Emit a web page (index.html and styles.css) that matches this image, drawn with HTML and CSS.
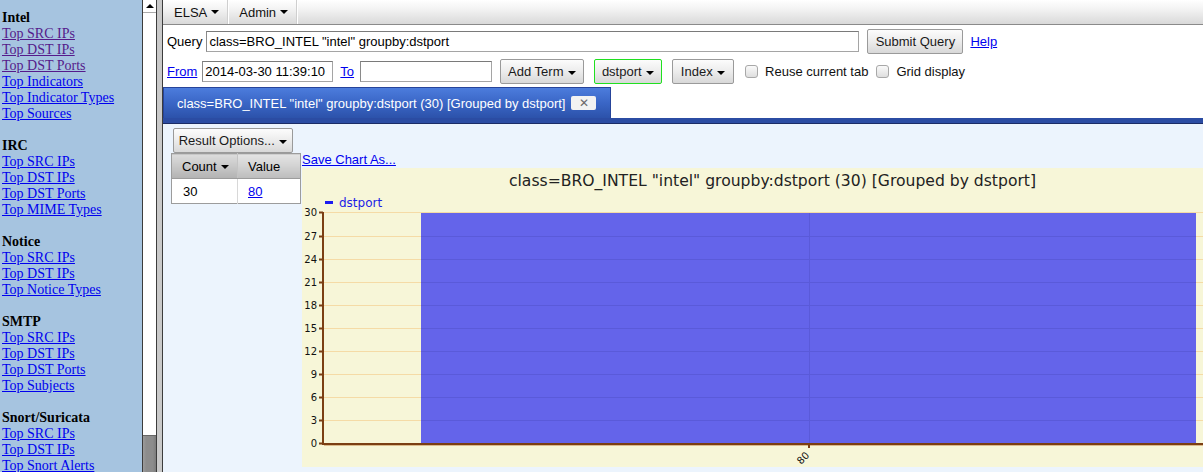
FILE: index.html
```html
<!DOCTYPE html>
<html lang="en">
<head>
  <meta charset="UTF-8">
  <title>ELSA</title>
  <link rel="stylesheet" href="styles.css">
</head>
<body>
<div class="frames">

  <!-- Left frame: dashboard links -->
  <div class="side">
    <b>Intel</b><br>
    <a href="#" class="seen">Top SRC IPs</a><br>
    <a href="#" class="seen">Top DST IPs</a><br>
    <a href="#" class="seen">Top DST Ports</a><br>
    <a href="#">Top Indicators</a><br>
    <a href="#">Top Indicator Types</a><br>
    <a href="#">Top Sources</a><br>
    <br>
    <b>IRC</b><br>
    <a href="#">Top SRC IPs</a><br>
    <a href="#">Top DST IPs</a><br>
    <a href="#">Top DST Ports</a><br>
    <a href="#">Top MIME Types</a><br>
    <br>
    <b>Notice</b><br>
    <a href="#">Top SRC IPs</a><br>
    <a href="#">Top DST IPs</a><br>
    <a href="#">Top Notice Types</a><br>
    <br>
    <b>SMTP</b><br>
    <a href="#">Top SRC IPs</a><br>
    <a href="#">Top DST IPs</a><br>
    <a href="#">Top DST Ports</a><br>
    <a href="#">Top Subjects</a><br>
    <br>
    <b>Snort/Suricata</b><br>
    <a href="#">Top SRC IPs</a><br>
    <a href="#">Top DST IPs</a><br>
    <a href="#">Top Snort Alerts</a>
  </div>
  <div class="vscroll">
    <div class="arrow"></div>
    <div class="thumb"></div>
  </div>
  <div class="frame-edge"></div>

  <!-- Right frame: query UI -->
  <div class="main">
    <div class="topnav">
      <div class="menu">ELSA <span class="caret"></span></div>
      <div class="menu">Admin <span class="caret"></span></div>
    </div>

    <div class="query-row">
      <label>Query</label>
      <input class="field q-input" type="text" value='class=BRO_INTEL "intel" groupby:dstport'>
      <button class="btn submit">Submit Query</button>
      <a href="#" class="help">Help</a>
    </div>

    <div class="term-row">
      <a href="#">From</a>
      <input class="field from-input" type="text" value="2014-03-30 11:39:10">
      <a href="#" class="to-link">To</a>
      <input class="field to-input" type="text">
      <button class="btn add-term">Add Term <span class="caret"></span></button>
      <button class="btn groupby">dstport <span class="caret"></span></button>
      <button class="btn index">Index <span class="caret"></span></button>
      <input type="checkbox" class="check">
      <span class="check-label">Reuse current tab</span>
      <input type="checkbox" class="check check-2">
      <span class="check-label">Grid display</span>
    </div>

    <div class="tabbar">
      <div class="tab">
        class=BRO_INTEL "intel" groupby:dstport (30) [Grouped by dstport]
        <span class="tab-close">&#x2715;</span>
      </div>
    </div>

    <div class="result">
      <div class="result-left">
        <button class="btn options">Result Options... <span class="caret"></span></button>
        <table class="grid">
          <tr>
            <th class="sorted">Count <span class="caret"></span></th>
            <th>Value</th>
          </tr>
          <tr>
            <td>30</td>
            <td><a href="#">80</a></td>
          </tr>
        </table>
      </div>

      <div class="result-right">
        <a href="#" class="save-chart">Save Chart As...</a>
        <svg class="chart" width="910" height="299" viewBox="0 0 910 299">
          <text class="chart-title" x="470.5" y="18" text-anchor="middle">class=BRO_INTEL "intel" groupby:dstport (30) [Grouped by dstport]</text>

          <rect x="23" y="33" width="8" height="3" fill="#1c1cf0"/>
          <text class="legend" x="37" y="39">dstport</text>

          <!-- grid lines behind the bar -->
          <g stroke="#f5dba6" stroke-width="1">
            <line x1="22" x2="910" y1="44.5" y2="44.5"/>
            <line x1="22" x2="910" y1="68.5" y2="68.5"/>
            <line x1="22" x2="910" y1="91.5" y2="91.5"/>
            <line x1="22" x2="910" y1="114.5" y2="114.5"/>
            <line x1="22" x2="910" y1="137.5" y2="137.5"/>
            <line x1="22" x2="910" y1="160.5" y2="160.5"/>
            <line x1="22" x2="910" y1="183.5" y2="183.5"/>
            <line x1="22" x2="910" y1="206.5" y2="206.5"/>
            <line x1="22" x2="910" y1="229.5" y2="229.5"/>
            <line x1="22" x2="910" y1="252.5" y2="252.5"/>
          </g>

          <rect x="119" y="45" width="775" height="230" fill="#6464ea"/>

          <!-- grid lines showing through the bar -->
          <g stroke="#5a5ad9" stroke-width="1">
            <line x1="119" x2="894" y1="68.5" y2="68.5"/>
            <line x1="119" x2="894" y1="91.5" y2="91.5"/>
            <line x1="119" x2="894" y1="114.5" y2="114.5"/>
            <line x1="119" x2="894" y1="137.5" y2="137.5"/>
            <line x1="119" x2="894" y1="160.5" y2="160.5"/>
            <line x1="119" x2="894" y1="183.5" y2="183.5"/>
            <line x1="119" x2="894" y1="206.5" y2="206.5"/>
            <line x1="119" x2="894" y1="229.5" y2="229.5"/>
            <line x1="119" x2="894" y1="252.5" y2="252.5"/>
            <line x1="507.5" x2="507.5" y1="45" y2="275"/>
          </g>

          <!-- axes -->
          <line x1="21" x2="21" y1="44" y2="277" stroke="#7b3f14" stroke-width="2"/>
          <line x1="20" x2="910" y1="276" y2="276" stroke="#7b3f14" stroke-width="2"/>
          <line x1="22" x2="910" y1="277.5" y2="277.5" stroke="#dcbb8c" stroke-width="1"/>
          <g stroke="#7b3f14" stroke-width="2">
            <line x1="17" x2="21" y1="44.5" y2="44.5"/>
            <line x1="17" x2="21" y1="68.5" y2="68.5"/>
            <line x1="17" x2="21" y1="91.5" y2="91.5"/>
            <line x1="17" x2="21" y1="114.5" y2="114.5"/>
            <line x1="17" x2="21" y1="137.5" y2="137.5"/>
            <line x1="17" x2="21" y1="160.5" y2="160.5"/>
            <line x1="17" x2="21" y1="183.5" y2="183.5"/>
            <line x1="17" x2="21" y1="206.5" y2="206.5"/>
            <line x1="17" x2="21" y1="229.5" y2="229.5"/>
            <line x1="17" x2="21" y1="252.5" y2="252.5"/>
            <line x1="17" x2="21" y1="275.5" y2="275.5"/>
            <line x1="507" x2="507" y1="276" y2="280"/>
          </g>

          <g class="tick-label" text-anchor="end">
            <text x="15" y="48">30</text>
            <text x="15" y="72">27</text>
            <text x="15" y="95">24</text>
            <text x="15" y="118">21</text>
            <text x="15" y="141">18</text>
            <text x="15" y="164">15</text>
            <text x="15" y="187">12</text>
            <text x="15" y="210">9</text>
            <text x="15" y="233">6</text>
            <text x="15" y="256">3</text>
            <text x="15" y="279">0</text>
            <text x="508" y="288" transform="rotate(-45 508 288)">80</text>
          </g>
        </svg>
      </div>
    </div>
  </div>
</div>
</body>
</html>
```

FILE: styles.css
```css
* { box-sizing: border-box; }
html, body { margin: 0; height: 100%; overflow: hidden; }
body {
  font-family: "Liberation Sans", Arial, sans-serif;
  font-size: 13px;
  color: #000;
}

.frames { display: flex; height: 100vh; }

/* left frame */
.side {
  width: 142px;
  flex: none;
  background: #a6c4e0;
  padding: 10px 0 0 2px;
  font-family: "Liberation Serif", "Times New Roman", serif;
  font-size: 14px;
  line-height: 16px;
  white-space: nowrap;
  overflow: hidden;
}
.side a { color: #0000ee; }
.side a.seen { color: #551a8b; }

.vscroll {
  width: 15px;
  flex: none;
  background: #fff;
  border-left: 1px solid #3c3c3c;
  border-right: 1px solid #3c3c3c;
  display: flex;
  flex-direction: column;
  justify-content: space-between;
}
.vscroll .arrow {
  height: 13px;
  border-bottom: 1px solid #aaa;
  display: flex;
  justify-content: center;
  align-items: center;
}
.vscroll .arrow::before {
  content: "";
  border-bottom: 4px solid #000;
  border-left: 4px solid transparent;
  border-right: 4px solid transparent;
}
.vscroll .thumb {
  height: 37px;
  background: linear-gradient(to right, #9c9c9c, #8c8c8c 25%, #8c8c8c 75%, #7c7c7c);
  border-top: 1px solid #666;
}

.frame-edge {
  width: 6px;
  flex: none;
  background: #c9c9c9;
  border-right: 1px solid #3c3c3c;
}

/* right frame */
.main {
  flex: 1;
  min-width: 0;
  overflow: hidden;
  background: #fff;
  display: flex;
  flex-direction: column;
}
.main a { color: #0000ee; }

.caret {
  display: inline-block;
  width: 0;
  height: 0;
  vertical-align: middle;
  margin-left: 1px;
  border-top: 4px solid #000;
  border-left: 4px solid transparent;
  border-right: 4px solid transparent;
}

.topnav {
  height: 25px;
  flex: none;
  display: flex;
  background: linear-gradient(#ffffff, #f2f2f2 40%, #d9d9d9);
  border-bottom: 1px solid #8a8a8a;
}
.topnav .menu {
  display: flex;
  align-items: center;
  gap: 3px;
  padding: 0 8px 0 11px;
  border-right: 1px solid #cfcfcf;
  box-shadow: 1px 0 0 #fff;
  color: #111;
}

.field {
  height: 21px;
  border: 1px solid #a5a5a5;
  border-top-color: #7a7a7a;
  border-left-color: #8a8a8a;
  padding: 0 2px;
  font-family: "Liberation Sans", Arial, sans-serif;
  font-size: 13px;
  color: #000;
  background: #fff;
  outline: none;
}

.btn {
  height: 25px;
  padding: 0;
  border: 1px solid #9a9a9a;
  border-radius: 2px;
  background: linear-gradient(#fcfcfc, #ececec 50%, #d8d8d8);
  font-family: "Liberation Sans", Arial, sans-serif;
  font-size: 13px;
  color: #1a1a1a;
  text-align: center;
}

.query-row {
  height: 32px;
  flex: none;
  display: flex;
  align-items: center;
  padding-left: 4px;
}
.query-row label { margin-right: 4px; }
.q-input { width: 653px; }
.submit { width: 96px; margin-left: 8px; }
.help { margin-left: 7px; }

.term-row {
  height: 29px;
  flex: none;
  display: flex;
  align-items: center;
  padding-left: 4px;
}
.from-input { width: 131px; margin-left: 5px; }
.to-link { margin-left: 7px; }
.to-input { width: 132px; margin-left: 6px; }
.add-term { width: 84px; margin-left: 8px; }
.groupby { width: 68px; margin-left: 10px; border-color: #20e020; }
.index { width: 62px; margin-left: 10px; }
.check {
  appearance: none;
  width: 13px;
  height: 13px;
  margin: 0 0 0 11px;
  border: 1px solid #a8a8a8;
  border-radius: 3px;
  background: linear-gradient(#fafafa, #dedede);
}
.check-2 { margin-left: 8px; }
.check-label { margin-left: 7px; color: #111; }

.tabbar {
  flex: none;
  margin-top: 1px;
  display: flex;
  border-bottom: 5px solid #2b4ca3;
  box-shadow: 0 1px 0 #1b2c66;
  position: relative;
}
.tab {
  height: 31px;
  display: flex;
  align-items: center;
  padding: 0 14px 0 13px;
  background: linear-gradient(#4c7cdc, #3a66c6 50%, #2c52aa);
  border: 1px solid #26449a;
  border-bottom: none;
  color: #fff;
  white-space: nowrap;
}
.tab-close {
  width: 25px;
  height: 14px;
  margin-left: 6px;
  background: #f2f2f2;
  border-radius: 2px;
  color: #6a6a6a;
  font-family: "DejaVu Sans", sans-serif;
  font-size: 12px;
  font-weight: bold;
  line-height: 14px;
  text-align: center;
}

.result {
  flex: 1;
  display: flex;
  background: #ecf4fd;
  padding: 5px 0 0 8px;
}
.result-left { width: 130px; flex: none; }
.options { width: 120px; margin-left: 2px; display: block; }

.grid {
  width: 130px;
  border-collapse: collapse;
  border: 1px solid #9c9c9c;
  background: #fff;
}
.grid th {
  height: 25px;
  padding: 0 0 0 10px;
  text-align: left;
  font-weight: normal;
  background: linear-gradient(#e4e4e4, #d2d2d2 50%, #bcbcbc);
  border-bottom: 1px solid #9c9c9c;
}
.grid th.sorted {
  width: 66px;
  background: linear-gradient(#dcdcdc, #c8c8c8 50%, #b2b2b2);
  border-right: 1px solid #c4c4c4;
}
.grid td {
  height: 25px;
  padding: 0 0 0 11px;
}
.grid td + td { border-left: 1px solid #d8d8d8; padding-left: 10px; }

.result-right {
  flex: none;
  margin-left: 1px;
  padding-top: 24px;
}
.save-chart { display: block; line-height: 16px; }
.chart { display: block; background: #f7f6d8; }

.chart-title {
  font-family: "DejaVu Sans", Verdana, sans-serif;
  font-size: 15.6px;
  fill: #222;
}
.legend {
  font-family: "DejaVu Sans", Verdana, sans-serif;
  font-size: 12px;
  fill: #1c1ce6;
}
.tick-label {
  font-family: "DejaVu Sans", Verdana, sans-serif;
  font-size: 10px;
  fill: #111;
}
```
